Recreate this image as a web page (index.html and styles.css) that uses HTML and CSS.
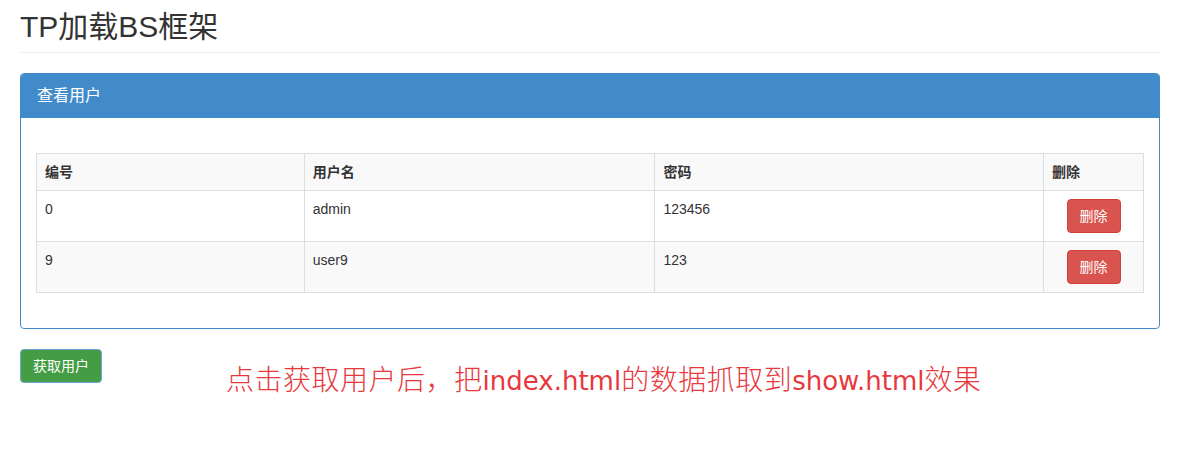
FILE: index.html
```html
<!DOCTYPE html>
<html lang="zh-CN">
<head>
<meta charset="utf-8">
<title>TP加载BS框架</title>
<link rel="stylesheet" href="styles.css">
</head>
<body>
<div class="page">
  <div class="page-header"><h2>TP加载BS框架</h2></div>
  <div class="panel">
    <div class="panel-heading">查看用户</div>
    <div class="panel-body">
      <table class="grid">
        <colgroup><col class="c1"><col class="c2"><col class="c3"><col class="c4"></colgroup>
        <tbody>
          <tr class="odd"><th>编号</th><th>用户名</th><th>密码</th><th>删除</th></tr>
          <tr><td>0</td><td>admin</td><td>123456</td><td class="act"><button class="btn btn-danger">删除</button></td></tr>
          <tr class="odd"><td>9</td><td>user9</td><td>123</td><td class="act"><button class="btn btn-danger">删除</button></td></tr>
        </tbody>
      </table>
    </div>
  </div>
  <div class="bottom">
    <button class="btn btn-success">获取用户</button>
    <p class="note">点击获取用户后，把<span class="lat">index.html</span>的数据抓取到<span class="lat">show.html</span>效果</p>
  </div>
</div>
</body>
</html>
```
FILE: styles.css
```css
* { box-sizing: border-box; }
html, body { margin: 0; padding: 0; background: #fff; }
body {
  font-family: "Liberation Sans", Arial, "Noto Sans CJK SC", sans-serif;
  font-size: 14px;
  line-height: 20px;
  color: #333;
}
.page { padding: 10px 20px 0; }
.page-header {
  padding-bottom: 9px;
  border-bottom: 1px solid #eee;
  margin-bottom: 20px;
}
.page-header h2 {
  margin: 0;
  font-size: 30px;
  line-height: 33px;
  font-weight: normal;
  color: #333;
}
.panel {
  border: 1px solid #428bca;
  border-radius: 4px;
  margin-bottom: 20px;
}
.panel-heading {
  background: #428bca;
  color: #fff;
  padding: 10px 16px;
  font-size: 16px;
  line-height: 24px;
  border-radius: 3px 3px 0 0;
}
.panel-body { padding: 15px; }
.grid {
  width: 100%;
  border-collapse: collapse;
  border: 1px solid #ddd;
  margin: 20px 0;
}
.c1 { width: 268px; }
.c2 { width: 351px; }
.c3 { width: 389px; }
.c4 { width: 100px; }
.grid th, .grid td {
  border: 1px solid #ddd;
  padding: 8px;
  text-align: left;
  vertical-align: top;
  line-height: 20px;
}
.grid th { font-weight: bold; }
.grid tr.odd { background: #f9f9f9; }
.grid td.act { text-align: center; }
.btn {
  display: inline-block;
  font-family: "Liberation Sans", Arial, "Noto Sans CJK SC", sans-serif;
  font-size: 14px;
  line-height: 20px;
  padding: 6px 12px;
  border: 1px solid transparent;
  border-radius: 4px;
  color: #fff;
  cursor: pointer;
}
.btn-danger { background: #d9534f; border-color: #d43f3a; }
.btn-success { background: #449d44; border-color: #6fa6d6; }
.bottom { display: flex; align-items: flex-start; }
.note {
  margin: 12px 0 0 124px;
  font-family: "Noto Sans CJK SC", sans-serif;
  font-weight: 300;
  font-size: 28px;
  line-height: 34px;
  letter-spacing: 0.5px;
  color: #e8383d;
}
.note .lat {
  font-family: "DejaVu Sans", Verdana, sans-serif;
  font-weight: normal;
  font-size: 26px;
  letter-spacing: 0;
}
```
